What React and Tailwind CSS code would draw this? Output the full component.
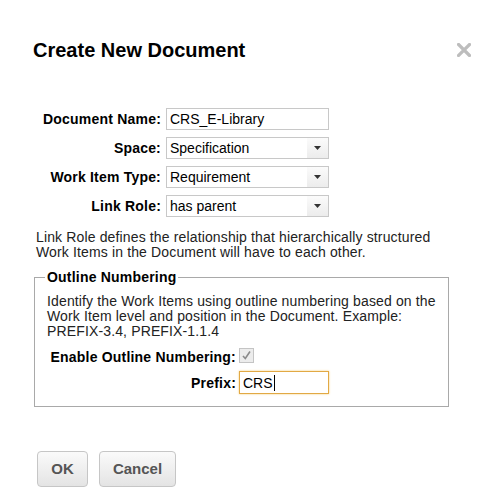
import React from "react";

function Select({ value }) {
  return (
    <div className="relative flex h-[22px] items-center border border-[#c8c8c8] bg-white">
      <span className="pl-[3px] text-[14px] leading-[16px] text-black">{value}</span>
      <div className="absolute right-0 top-0 flex h-full w-[21px] items-center justify-center bg-gradient-to-b from-[#fbfbfb] to-[#ececec]">
        <svg width="7" height="4" viewBox="0 0 7 4">
          <path d="M0 0 H7 L3.5 4 Z" fill="#333" />
        </svg>
      </div>
    </div>
  );
}

function Label({ children }) {
  return (
    <div className="flex items-center justify-end text-[14px] font-bold leading-[16px] tracking-[0.2px] text-black">
      {children}
    </div>
  );
}

export default function App() {
  return (
    <div className="relative h-[499px] w-[485px] bg-white font-['Liberation_Sans',Arial,sans-serif] text-[14px] text-black">
      <div className="flex items-start justify-between pt-[39px]">
        <h1 className="pl-[33px] text-[20px] font-bold leading-[23px]">Create New Document</h1>
        <div className="mr-[14px] mt-[4px]">
          <svg width="14" height="14" viewBox="0 0 14 14">
            <path d="M1.5 1.5 L12.5 12.5 M12.5 1.5 L1.5 12.5" stroke="#bdbdbd" strokeWidth="3.2" strokeLinecap="square" />
          </svg>
        </div>
      </div>

      <div className="ml-[33px] mt-[46px] grid grid-cols-[128px_163px] gap-x-[5px] gap-y-[7px]">
        <Label>Document Name:</Label>
        <div className="flex h-[22px] items-center border border-[#c8c8c8] bg-white">
          <span className="pl-[3px] text-[14px] leading-[16px]">CRS_E-Library</span>
        </div>
        <Label>Space:</Label>
        <Select value="Specification" />
        <Label>Work Item Type:</Label>
        <Select value="Requirement" />
        <Label>Link Role:</Label>
        <Select value="has parent" />
      </div>

      <p className="ml-[36px] mt-[13px] text-[14px] leading-[15px] tracking-[0.14px] text-[#222]">
        Link Role defines the relationship that hierarchically structured
        <br />
        Work Items in the Document will have to each other.
      </p>

      <fieldset className="ml-[34px] mt-[9px] w-[415px] border border-[#a9a9a9] px-[12px] pb-[12px]">
        <legend className="-ml-[2px] px-[2px] text-[14px] font-bold leading-[16px] tracking-[0.2px]">Outline Numbering</legend>
        <p className="mt-[9px] text-[14px] leading-[15px] tracking-[0.14px] text-[#222]">
          Identify the Work Items using outline numbering based on the
          <br />
          Work Item level and position in the Document. Example:
          <br />
          PREFIX-3.4, PREFIX-1.1.4
        </p>
        <div className="mt-[9px] grid grid-cols-[189px_auto] items-start gap-x-[3px] gap-y-[7px]">
          <div className="flex h-[16px] justify-end pt-[1px] text-[14px] font-bold leading-[16px] tracking-[0.2px]">
            Enable Outline Numbering:
          </div>
          <div className="flex h-[15px] w-[15px] items-center justify-center border border-[#c4c4c4] bg-[#ececec]">
            <svg width="11" height="11" viewBox="0 0 11 11">
              <path d="M2 6 L4.3 8.5 L9 1.5" stroke="#8a8a8a" strokeWidth="1.6" fill="none" />
            </svg>
          </div>
          <div className="flex h-[23px] items-center justify-end text-[14px] font-bold leading-[16px] tracking-[0.2px]">Prefix:</div>
          <div className="flex h-[23px] w-[90px] items-center border border-[#e2a944] bg-white shadow-[0_0_2px_#f3cc7a]">
            <span className="pl-[3px] text-[14px] leading-[16px]">CRS</span>
            <span className="ml-[1px] h-[16px] w-[1px] bg-black" />
          </div>
        </div>
      </fieldset>

      <div className="ml-[37px] mt-[44px] flex gap-[11px]">
        <button className="h-[36px] w-[51px] rounded-[4px] border border-[#c6c6c6] bg-gradient-to-b from-[#fafafa] to-[#e4e4e4] text-[15px] font-bold text-[#555]">
          OK
        </button>
        <button className="h-[36px] w-[77px] rounded-[4px] border border-[#c6c6c6] bg-gradient-to-b from-[#fafafa] to-[#e4e4e4] text-[15px] font-bold text-[#555]">
          Cancel
        </button>
      </div>
    </div>
  );
}
